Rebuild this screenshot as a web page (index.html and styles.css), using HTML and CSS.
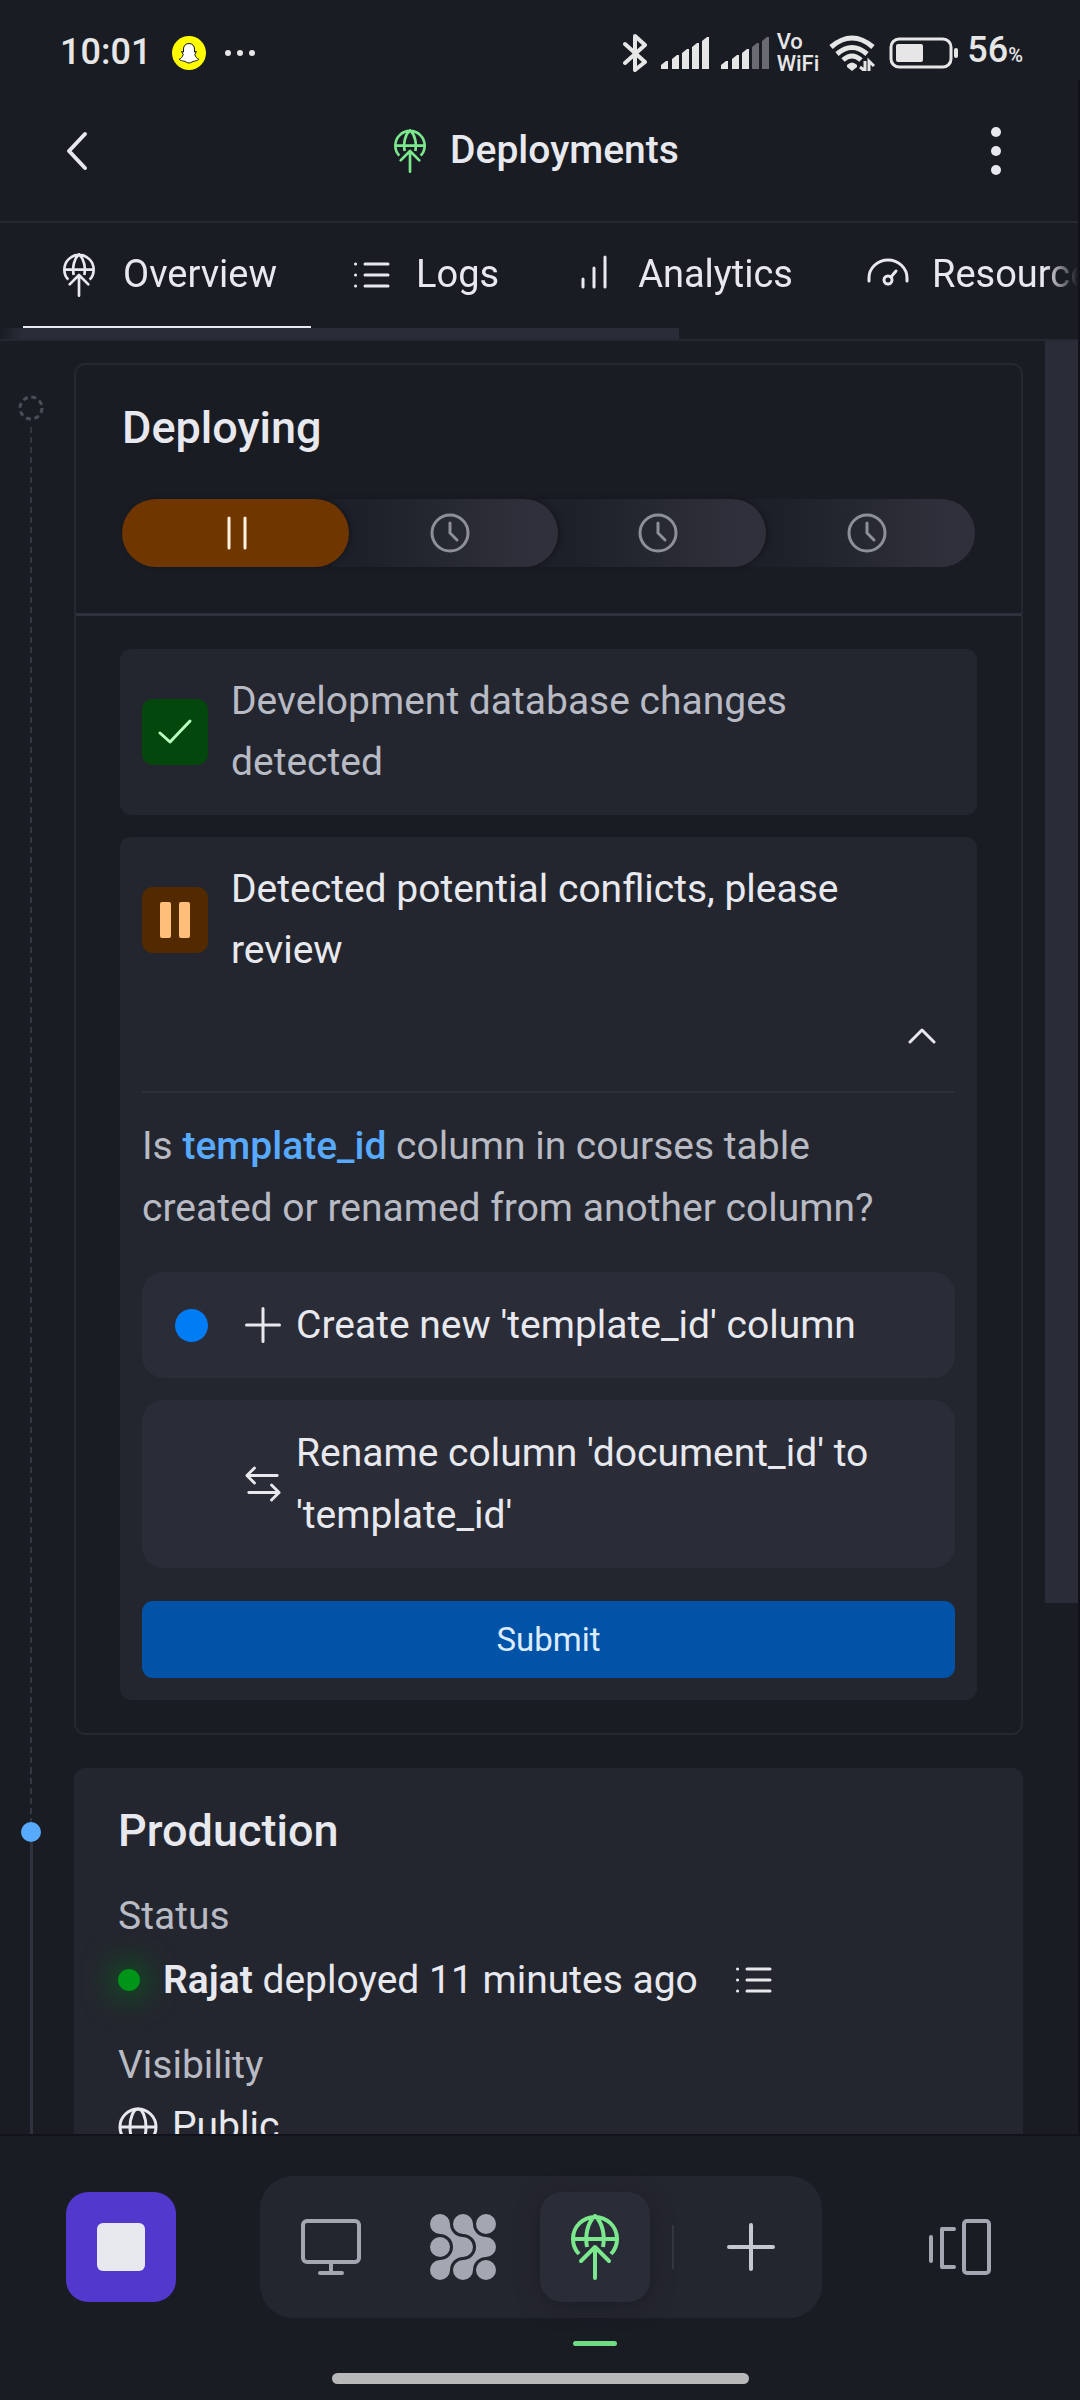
FILE: index.html
```html
<!DOCTYPE html>
<html lang="en">
<head>
<meta charset="utf-8">
<meta name="viewport" content="width=device-width, initial-scale=1">
<title>Deployments</title>
<link rel="stylesheet" href="styles.css">
</head>
<body>
<svg class="sprite" aria-hidden="true">
  <symbol id="deploy" viewBox="0 0 48 66">
    <g fill="none" stroke="currentColor" stroke-width="4">
      <path d="M8 40A22 22 0 1 1 40 40M2 25H46M16 33C14 22 16 9 24 2C32 9 34 22 32 33"/>
      <path d="M10 47L24 33L38 47M24 34V64" stroke-linecap="round" stroke-linejoin="round"/>
    </g>
  </symbol>
  <symbol id="list" viewBox="0 0 36 28">
    <g fill="none" stroke="currentColor" stroke-linecap="round">
      <path stroke-width="3" d="M11 3H34M11 14H34M11 25H34"/>
      <path stroke-width="3" d="M1.500 3H1.600M1.500 14H1.600M1.500 25H1.600"/>
    </g>
  </symbol>
  <symbol id="clock" viewBox="0 0 40 40">
    <g fill="none" stroke="currentColor" stroke-width="3" stroke-linecap="round">
      <circle cx="20" cy="20" r="18"/><path d="M20 10V20L27 27"/>
    </g>
  </symbol>
  <symbol id="plus" viewBox="0 0 48 48">
    <path d="M2 24H46M24 2V46" fill="none" stroke="currentColor" stroke-width="4" stroke-linecap="round"/>
  </symbol>
</svg>

<div class="app">
  <div class="status-bar">
    <div class="status-left">
      <span class="clock">10:01</span>
      <svg class="snap" viewBox="0 0 34 34"><circle cx="17" cy="17" r="17" fill="#fffc00"/><path d="M17 7.500C20.500 7.500 22.500 10 22.500 13V16L24.500 15.500L22.800 18.500C23.500 21 25 22.500 26.800 23.200C25.500 25 23.500 24.500 22.500 25.200C20.500 25 19.500 27 17 27S13.500 25 11.500 25.200C10.500 24.500 8.500 25 7.200 23.200C9 22.500 10.500 21 11.200 18.500L9.500 15.500L11.500 16V13C11.500 10 13.500 7.500 17 7.500Z" fill="#fff" stroke="#111" stroke-width="1"/></svg>
      <svg class="more" viewBox="0 0 32 8"><g fill="#e6e6e6"><circle cx="4" cy="4" r="3"/><circle cx="16" cy="4" r="3"/><circle cx="28" cy="4" r="3"/></g></svg>
    </div>
    <div class="status-right">
      <svg class="bluetooth" viewBox="0 0 24 40"><path d="M2 11L22 29L12 37V3L22 12L2 30" fill="none" stroke="#e6e6e6" stroke-width="4" stroke-linecap="round" stroke-linejoin="round"/></svg>
      <svg class="signal" viewBox="0 0 48 32"><g fill="#e6e6e6"><path d="M0 32V28L5 24H7V32ZM11 32V22L16 18H18V32ZM21 32V16L26 12H28V32ZM31 32V10L36 6H38V32ZM41 32V4L46 0H48V32Z"/></g></svg>
      <svg class="signal" viewBox="0 0 48 32"><path fill="#e6e6e6" d="M0 32V28L5 24H7V32ZM11 32V22L16 18H18V32ZM21 32V16L26 12H28V32Z"/><path fill="#6a6b71" d="M31 32V10L36 6H38V32ZM41 32V4L46 0H48V32Z"/></svg>
      <span class="vowifi">Vo<br>WiFi</span>
      <svg class="wifi" viewBox="0 0 46 36"><g fill="none" stroke="#e6e6e6" stroke-width="5"><path d="M2 12Q23-6 44 12M8 19Q23 6 38 19M14 25Q23 17 32 25"/></g><path d="M18 30Q23 25 28 30V32L23 36L18 32Z" fill="#e6e6e6"/><path d="M36 26V36L31 32M40 36V26L45 31" fill="none" stroke="#e6e6e6" stroke-width="3"/></svg>
      <svg class="battery" viewBox="0 0 70 32"><rect x="2" y="2" width="60" height="28" rx="8" fill="none" stroke="#e6e6e6" stroke-width="3"/><rect x="7" y="7" width="27" height="18" rx="2" fill="#e6e6e6"/><rect x="65" y="11" width="4" height="10" rx="2" fill="#e6e6e6"/></svg>
      <span class="charge">56<small>%</small></span>
    </div>
  </div>

  <div class="frame">
    <header class="header">
      <button class="icon-button" aria-label="Back"><svg class="back" viewBox="0 0 24 40"><path d="M20 3L4 20L20 37" fill="none" stroke="currentColor" stroke-width="4" stroke-linecap="round" stroke-linejoin="round"/></svg></button>
      <h1 class="title"><svg class="deploy-icon green"><use href="#deploy"/></svg>Deployments</h1>
      <button class="icon-button" aria-label="More options"><svg class="kebab" viewBox="0 0 10 50"><g fill="currentColor"><circle cx="5" cy="6" r="5"/><circle cx="5" cy="25" r="5"/><circle cx="5" cy="44" r="5"/></g></svg></button>
    </header>

    <nav class="tabs" aria-label="Deployment sections">
      <div class="tab-list">
        <a class="tab active" href="#overview"><svg class="tab-icon"><use href="#deploy"/></svg>Overview</a>
        <a class="tab" href="#logs"><svg class="tab-icon list"><use href="#list"/></svg>Logs</a>
        <a class="tab" href="#analytics"><svg class="tab-icon" viewBox="0 0 44 44"><path d="M11 34V26M22 34V15M33 34V4" fill="none" stroke="currentColor" stroke-width="3" stroke-linecap="round"/></svg>Analytics</a>
        <a class="tab" href="#resources"><svg class="tab-icon" viewBox="0 0 44 44"><g fill="none" stroke="currentColor" stroke-width="3"><path d="M3 28V25A19 18 0 0 1 41 25V28" stroke-linecap="round"/><circle cx="22" cy="27" r="4"/><path d="M25 24L30 18" stroke-linecap="round"/></g></svg>Resources</a>
      </div>
      <div class="tab-scroll"></div>
    </nav>

    <main class="content">
      <div class="timeline">
        <div class="rail">
          <svg class="pending-dot" viewBox="0 0 26 26"><circle cx="13" cy="13" r="11" fill="none" stroke="currentColor" stroke-width="3" stroke-dasharray="5 3.640"/></svg>
          <div class="rail-dashed"></div>
        </div>
        <section class="card deploying">
          <div class="card-head">
            <h2>Deploying</h2>
            <div class="steps">
              <div class="step current"><svg class="step-icon" viewBox="0 0 40 40"><path d="M14 5V35M30 5V35" stroke="#fff1e0" stroke-width="3" stroke-linecap="round"/></svg></div>
              <div class="step"><svg class="step-icon"><use href="#clock"/></svg></div>
              <div class="step"><svg class="step-icon"><use href="#clock"/></svg></div>
              <div class="step"><svg class="step-icon"><use href="#clock"/></svg></div>
            </div>
          </div>
          <div class="tasks">
            <div class="task muted">
              <div class="task-row">
                <span class="badge done"><svg viewBox="0 0 66 66"><path d="M18 34L28 43L48 22" fill="none" stroke="#b9ffc0" stroke-width="3" stroke-linecap="round" stroke-linejoin="round"/></svg></span>
                <p>Development database changes detected</p>
              </div>
            </div>
            <div class="task">
              <div class="task-row">
                <span class="badge paused"><svg viewBox="0 0 66 66"><g fill="#ffbe7a"><rect x="18" y="15" width="11" height="36" rx="2"/><rect x="37" y="15" width="11" height="36" rx="2"/></g></svg></span>
                <p>Detected potential conflicts, please review</p>
              </div>
              <div class="collapse-row">
                <button class="collapse" aria-label="Collapse"><svg viewBox="0 0 28 16"><path d="M2 14L14 2L26 14" fill="none" stroke="currentColor" stroke-width="3" stroke-linecap="round" stroke-linejoin="round"/></svg></button>
              </div>
              <form class="conflict">
                <p class="question">Is <strong>template_id</strong> column in courses table created or renamed from another column?</p>
                <label class="option">
                  <input type="radio" name="change" checked>
                  <svg class="option-icon"><use href="#plus"/></svg>
                  <span>Create new 'template_id' column</span>
                </label>
                <label class="option">
                  <input type="radio" name="change">
                  <svg class="option-icon" viewBox="0 0 38 38"><path d="M34 10H3M10 2L2 10L10 18M4 28H35M28 20L36 28L28 36" fill="none" stroke="currentColor" stroke-width="3" stroke-linecap="round" stroke-linejoin="round"/></svg>
                  <span>Rename column 'document_id' to 'template_id'</span>
                </label>
                <button class="submit" type="button">Submit</button>
              </form>
            </div>
          </div>
        </section>
        <div class="rail live">
          <div class="rail-dashed lead"></div>
          <div class="live-dot"></div>
          <div class="rail-solid"></div>
        </div>
        <section class="card production">
          <h2>Production</h2>
          <h3>Status</h3>
          <p class="status-row"><span class="online"></span><span><b>Rajat</b> deployed 11 minutes ago</span><svg class="log-link"><use href="#list"/></svg></p>
          <h3>Visibility</h3>
          <p class="visibility-row"><svg class="globe" viewBox="0 0 40 40"><g fill="none" stroke="currentColor" stroke-width="3"><circle cx="20" cy="20" r="18"/><ellipse cx="20" cy="20" rx="8" ry="18"/><path d="M2 20H38"/></g></svg>Public</p>
        </section>
      </div>
      <div class="scroll-track"><div class="scroll-thumb"></div></div>
    </main>
  </div>

  <footer class="dock">
    <div class="dock-row">
      <button class="app-button" aria-label="Workspace"><span></span></button>
      <div class="dock-pill">
        <button class="dock-item" aria-label="Desktop"><svg class="monitor" viewBox="0 0 60 56"><g fill="none" stroke="currentColor" stroke-width="4"><rect x="2" y="2" width="56" height="41" rx="4"/><path d="M30 43V54M19 54H41" stroke-linecap="round"/></g></svg></button>
        <button class="dock-item" aria-label="Components"><svg class="mesh" viewBox="0 0 66 66"><g fill="currentColor"><path d="M10 20A10 10 0 1 1 20 10A13 13 0 0 0 33 23A10 10 0 0 1 33 43A13 13 0 0 0 20 56A10 10 0 1 1 10 46A13 13 0 0 0 10 20Z"/><path d="M33 20A10 10 0 1 1 43 10A13 13 0 0 0 56 23A10 10 0 0 1 56 43A13 13 0 0 0 43 56A10 10 0 1 1 33 46A13 13 0 0 0 33 20Z"/><circle cx="10" cy="33" r="10"/><circle cx="56" cy="10" r="10"/><circle cx="56" cy="56" r="10"/></g></svg></button>
        <button class="dock-item selected green" aria-label="Deployments"><svg class="dock-deploy"><use href="#deploy"/></svg></button>
        <span class="dock-divider"></span>
        <button class="dock-item bright" aria-label="Add"><svg class="dock-plus"><use href="#plus"/></svg></button>
      </div>
      <button class="dock-item panels-button" aria-label="Panels"><svg class="panels" viewBox="0 0 62 56"><g fill="none" stroke="currentColor" stroke-width="4" stroke-linecap="round" stroke-linejoin="round"><path d="M2 18V42M25 10H13V48H25"/><rect x="35" y="2" width="25" height="52" rx="3"/></g></svg></button>
    </div>
    <div class="home-indicator"></div>
  </footer>
</div>
</body>
</html>
```

FILE: styles.css
```css
* { box-sizing: border-box; }

:root {
  --bg: #1a1c24;
  --surface: #24262f;
  --raised: #2a2c37;
  --line: #252731;
  --text: #e8e9ee;
  --muted: #b8bac4;
  --green: #7be88e;
}

body {
  margin: 0;
  background: var(--bg);
  color: var(--text);
  font: 400 39px/61px Roboto, "Liberation Sans", sans-serif;
}

h1, h2, h3, p { margin: 0; }
svg { display: block; flex: none; }
button { margin: 0; padding: 0; border: 0; background: none; color: inherit; font: inherit; }
.sprite { position: absolute; width: 0; height: 0; }
.green { color: var(--green); }

.app { display: flex; flex-direction: column; height: 100vh; overflow: hidden; }

/* Phone status bar */
.status-bar {
  display: flex;
  justify-content: space-between;
  flex: none;
  height: 80px;
  padding: 25px 57px 0 60px;
  color: #e6e6e6;
}
.status-left, .status-right { display: flex; align-items: center; height: 55px; }
.clock { font-size: 36px; font-weight: 500; }
.snap { width: 34px; height: 34px; margin-left: 21px; }
.more { width: 32px; height: 8px; margin-left: 18px; }
.bluetooth { width: 24px; height: 40px; margin-right: 14px; }
.signal { width: 48px; height: 32px; margin-right: 12px; }
.vowifi { font-size: 22px; line-height: 22px; font-weight: 500; margin-right: 10px; margin-left: -4px; }
.wifi { width: 46px; height: 36px; margin-right: 14px; }
.battery { width: 70px; height: 32px; margin-right: 8px; }
.charge { font-size: 36px; font-weight: 500; }
.charge small { font-size: 20px; }

.frame {
  display: flex;
  flex-direction: column;
  flex: 1;
  min-height: 0;
  border-right: 2px solid #11121a;
}

.header {
  display: flex;
  align-items: center;
  justify-content: space-between;
  flex: none;
  height: 143px;
  padding: 0 27px 0 22px;
  border-bottom: 2px solid var(--line);
}
.icon-button { display: grid; place-items: center; width: 110px; height: 110px; }
.back { width: 24px; height: 40px; }
.kebab { width: 10px; height: 50px; }
.title { display: flex; align-items: center; gap: 24px; font-size: 39px; font-weight: 500; }
.deploy-icon { width: 32px; height: 44px; }

.tabs { flex: none; border-bottom: 2px solid var(--line); overflow: hidden; }
.tab-list, .tab-scroll {
  mask-image: linear-gradient(90deg, transparent, #000 22px, #000 calc(100% - 33px), transparent);
}
.tab-list { display: flex; gap: 5px; height: 105px; padding-left: 23px; font-size: 38px; }
.tab {
  display: flex;
  align-items: center;
  flex: none;
  gap: 22px;
  padding: 0 34px;
  border-bottom: 2px solid transparent;
  color: inherit;
  text-decoration: none;
}
.tab.active { border-color: var(--text); }
.tab-icon { width: 44px; height: 44px; }
.tab-icon.list { height: 28px; }
.tab-scroll { height: 11px; background: linear-gradient(var(--raised), var(--raised)) 0 0 / 63% 100% no-repeat; }

.content { display: flex; flex: 1; min-height: 0; overflow: hidden; }
.timeline {
  display: grid;
  grid-template-columns: 52px 1fr;
  column-gap: 22px;
  flex: 1;
  align-content: start;
  padding: 22px 22px 0 0;
}
.scroll-track { width: 33px; }
.scroll-thumb { height: 70.4%; background: var(--raised); }

.rail { display: flex; flex-direction: column; align-items: center; padding: 32px 0 0 10px; color: #4b4d59; }
.pending-dot { width: 26px; height: 26px; margin-bottom: 6px; }
.rail-dashed { flex: 1; width: 2px; background: repeating-linear-gradient(#343641 0 6px, transparent 6px 10px); }
.rail.live { padding-top: 0; }
.rail-dashed.lead { flex: none; height: 54px; }
.live-dot { width: 20px; height: 20px; border-radius: 50%; background: #58aaff; }
.rail-solid { flex: 1; width: 3px; background: #30323d; }

.card { border-radius: 11px; }
h2 { font-size: 45px; line-height: 66px; font-weight: 500; }
.deploying { border: 2px solid var(--line); margin-bottom: 33px; }
.card-head { padding: 30px 46px 46px; border-bottom: 3px solid #2f313d; }

/* Pipeline stages, each one tucked under the stage before it */
.steps { display: flex; margin-top: 38px; }
.step {
  display: grid;
  place-items: center;
  flex: 1;
  height: 68px;
  margin-left: -18px;
  border-radius: 0 34px 34px 0;
  background: linear-gradient(90deg, #1d2028 12%, #2f303b 88%);
  box-shadow: 2px 0 5px #14161d;
  color: #8d8f99;
}
.step:first-child { margin-left: 0; z-index: 4; }
.step:nth-child(2) { z-index: 3; }
.step:nth-child(3) { z-index: 2; }
.step:last-child { box-shadow: none; }
.step.current { border-radius: 34px; background: #703600; }
.step-icon { width: 40px; height: 40px; }
.step + .step .step-icon { margin-left: 11px; }

.tasks { display: grid; gap: 22px; padding: 33px 44px; }
.task { padding: 22px; border-radius: 11px; background: var(--surface); }
.task.muted { color: var(--muted); }
.task-row { display: flex; align-items: center; gap: 23px; padding-right: 22px; }
.badge { width: 66px; height: 66px; flex: none; border-radius: 11px; }
.badge.done { background: #04470c; }
.badge.paused { background: #532900; }
.collapse-row { display: flex; justify-content: flex-end; padding: 22px 0; }
.collapse { display: grid; place-items: center; width: 66px; height: 66px; }
.collapse svg { width: 28px; height: 16px; }
.conflict { display: grid; gap: 22px; padding-top: 22px; border-top: 2px solid #2d2f3a; line-height: 62px; }
.question { margin-bottom: 11px; padding-right: 22px; color: var(--muted); }
.question strong { color: #58aaff; font-weight: 500; }
.option { display: flex; align-items: center; padding: 22px 33px; border-radius: 22px; background: var(--raised); }
.option input { appearance: none; flex: none; width: 33px; height: 33px; margin: 0 37px 0 0; border-radius: 50%; }
.option input:checked { background: #007cf5; }
.option-icon { width: 36px; height: 36px; margin-right: 15px; }
.submit { height: 77px; margin-top: 11px; border-radius: 11px; background: #0053a6; color: #dcebff; font-size: 33px; line-height: 44px; }

.production { padding: 30px 44px 44px; background: var(--surface); }
h3 { font-size: 39px; line-height: 61px; font-weight: 400; color: var(--muted); }
.production h2, .status-row { margin-bottom: 22px; }
.status-row, .visibility-row { display: flex; align-items: center; line-height: 66px; }
.visibility-row { line-height: 61px; }
.status-row b { font-weight: 600; }
.online { width: 22px; height: 22px; margin-right: 23px; border-radius: 50%; background: #009418; box-shadow: 0 0 33px 4px #006b17; }
.log-link { width: 36px; height: 28px; margin-left: 38px; }
.globe { width: 40px; height: 40px; margin-right: 14px; }

/* Bottom dock */
.dock { flex: none; padding: 40px 65px 16px 66px; border-top: 2px solid #11121a; }
.dock-row { display: flex; align-items: center; justify-content: space-between; }
.app-button { display: grid; place-items: center; width: 110px; height: 110px; border-radius: 22px; background: #5238cc; }
.app-button span { width: 48px; height: 48px; border-radius: 6px; background: var(--text); }
.dock-pill { display: flex; align-items: center; gap: 22px; padding: 16px; border-radius: 33px; background: var(--surface); }
.dock-item { position: relative; display: grid; place-items: center; width: 110px; height: 110px; border-radius: 22px; color: #a2a7b2; }
.dock-item.bright { color: #c5c7d1; }
.dock-item.selected { background: var(--raised); color: var(--green); box-shadow: 0 4px 22px #1c1e27; }
.dock-item.selected::after { content: ""; position: absolute; top: 149px; width: 44px; height: 5px; border-radius: 3px; background: #6fdb82; }
.dock-divider { width: 2px; height: 44px; background: #343641; }
.monitor { width: 60px; height: 56px; }
.mesh { width: 66px; height: 66px; }
.dock-deploy { width: 48px; height: 66px; }
.dock-plus { width: 48px; height: 48px; }
.panels { width: 62px; height: 56px; }
.home-indicator { width: 44%; height: 11px; margin: 55px auto 0; border-radius: 6px; background: #b8b8b9; }
```
